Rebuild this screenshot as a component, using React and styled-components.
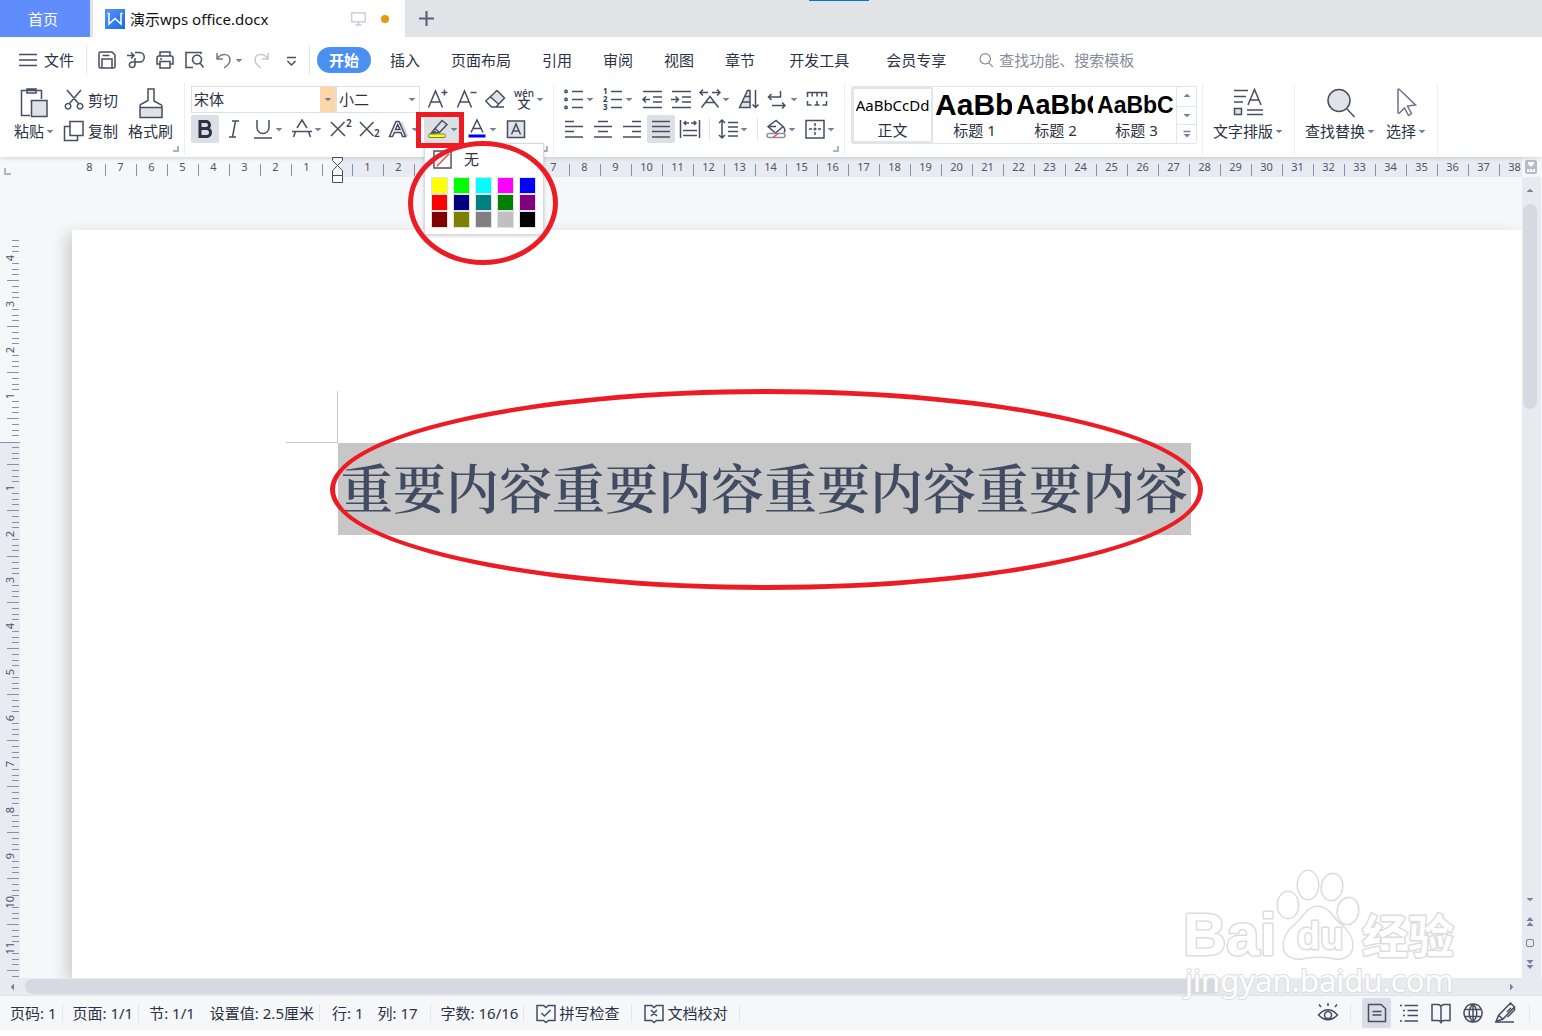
import React from "react";
import styled, { createGlobalStyle, css } from "styled-components";

const ink = "#2b3245";
const line = "#e3e5ea";
const marker = "#ed1c24";

const GlobalStyle = createGlobalStyle`
  *, *::before, *::after { box-sizing: border-box; }
  body {
    margin: 0;
    background: #fff;
    color: ${ink};
    font: 15px/20px "Noto Sans", "Noto Sans CJK SC", sans-serif;
  }
  button, select, input {
    margin: 0;
    padding: 0;
    border: 0;
    background: none;
    color: inherit;
    font: inherit;
    white-space: nowrap;
  }
  p { margin: 0; }
`;

const Shell = styled.div`
  display: flex;
  flex-direction: column;
  height: 100vh;
  padding-bottom: 6px;
  overflow: hidden;
  position: relative;
`;

/* ---------- icons ---------- */

const Svg = styled.svg`
  display: block;
  flex: none;
  overflow: visible;
  fill: none;
  stroke: #464e63;
  stroke-width: 1.5;
`;

const glyph = { stroke: "none", fill: "#343c50", fontFamily: '"Noto Sans", "Noto Sans CJK SC", sans-serif' };

const icons = {
  menu: <path d="M1 4.5h18M1 10h18M1 15.5h18" />,
  save: <path d="M2 3.500q0-1.500 1.500-1.500H15l3 3v11.500q0 1.500-1.500 1.500h-13q-1.500 0-1.500-1.500zM5 17.500V9h10v8.500M5.500 5.500h7" />,
  convert: <path d="M1 5.500h7M5 2.500l3 3-3 3M9 2.500h4.500a4.700 4.700 0 0 1 0 9.500H6.500a2.800 2.800 0 1 0 2.500 2.800V8" />,
  print: <path d="M5 6V2h10v4M5 14H2V8q0-2 2-2h12q2 0 2 2v6h-3M5 11.500h10V18H5zM5 9h2" />,
  preview: <path d="M9 17.500H2v-15h15V4M16 13l3.500 4.500M13 5a4.500 4.500 0 1 0 .1 0z" />,
  undo: <path stroke="#70788d" d="M4 3v6h6M4 9C8 3 17 3 17 10c0 4-3 6-6 8" />,
  redo: <path stroke="#c3c7ce" d="M16 3v6h-6M16 9C12 3 3 3 3 10c0 4 3 6 6 8" />,
  more: <path d="M6 7.500h9M6.500 11l4 4 4-4" />,
  search: <path stroke="#868c9b" d="M9 2a6.500 6.500 0 1 0 .1 0zM14 14l4.500 4.500" />,
  monitor: <path stroke="#bac3d8" d="M1 2.500h18v12H1zM10 14.500v4M6 18.500h8" />,
  plus: <path stroke="#566079" strokeWidth="2.800" d="M10 0v20M0 10h20" />,
  scissors: <path d="M3 0l11.500 13.500M17 0L5.500 13.500M4 13.500a2.800 2.800 0 1 0 .1 0zM16 13.500a2.800 2.800 0 1 0 .1 0z" />,
  copy: <><path d="M7 5.500H.500v14h13V15" /><path fill="#fff" d="M6 .500h13v14H6z" /></>,
  fontUp: <path d="M1.500 18.500l7-16.500 7 16.500M4 13h9M17.500.500v6M14.500 3.500h6" />,
  fontDown: <path d="M1.500 18.500l7-16.500 7 16.500M4 13h9M14.500 3.500h6" />,
  eraser: <><path fill="#dfe2e7" stroke="none" d="M12 2l7.500 7-6 6L6 8z" /><path d="M.800 12L12 1.500l7.500 7.500L11 18H6.500zM5.500 8l8.500 7.500M10 18h9" /></>,
  pinyin: <><text {...glyph} x="10" y="8" textAnchor="middle" fontSize="10" fontWeight="500">wén</text><text {...glyph} x="10" y="19" textAnchor="middle" fontSize="13" fontWeight="500">文</text></>,
  bullets: <path d="M8 2.500h11M8 10.500h11M8 18.500h11M2 1.300a1.200 1.200 0 1 0 .1 0zM2 9.300a1.200 1.200 0 1 0 .1 0zM2 17.300a1.200 1.200 0 1 0 .1 0z" />,
  numbers: <><path d="M8 2.500h11M8 10.500h11M8 18.500h11" /><text {...glyph} fontSize="8" fontWeight="700"><tspan x="0" y="5">1</tspan><tspan x="0" y="13">2</tspan><tspan x="0" y="21">3</tspan></text></>,
  outdent: <path d="M1 2.500h19M11 8h9M11 13h9M1 18.500h19M8 10.500H1M4 7.500l-3 3 3 3" />,
  indent: <path d="M1 2.500h19M11 8h9M11 13h9M1 18.500h19M0 10.500h7.500M4.500 7.500l3 3-3 3" />,
  textLayout: <path d="M0 3.500h8M3 .500l-3 3 3 3M12 3.500h8M17 .500l3 3-3 3M1.500 18.500L10 7.500l8.500 11M5.500 13.500h9" />,
  sort: <><path fill="#dfe2e7" d="M.500 18.500L8.500 1.500h2.500v17zM3 13h8M5.500 7.500H11" /><path d="M16.500 1v17.500M13.500 15.500l3 3 3-3" /></>,
  direction: <path d="M12.500 2v6H.500M3.500 5l-3 3 3 3M4 16.500h13M14 13.500l3 3-3 3" />,
  tabStops: <path d="M.500 8V3.500h19V8M5.200 3.500v4M10 3.500v4M14.800 3.500v4M.500 12v4h4M7.500 16h5M10 12v4M15.500 16h4v-4" />,
  bold: <path strokeWidth="3" stroke="#2b3245" d="M5 2.500h6a3.500 3.500 0 0 1 0 7H5zM5 9.500h6.500a4 4 0 0 1 0 8H5z" />,
  italic: <path d="M8 2h7M5 18h7M11.500 2l-3 16" />,
  underline: <path d="M4 1v7.500a6 6 0 0 0 12 0V1M1 19h18" />,
  strike: <path d="M5 9L10 1l5 8M0 12.500h20M3.500 12.500L1.500 18M16.500 12.500l2 5.500" />,
  superscript: <><path d="M0 3l14 14M13.500 3L0 17" /><text {...glyph} x="15" y="8" fontSize="10" fontWeight="600">2</text></>,
  subscript: <><path d="M0 3l13.500 14M13.500 3L0 17" /><text {...glyph} x="14" y="18" fontSize="10" fontWeight="600">2</text></>,
  effects: <><path stroke="#d2d5da" strokeWidth="3" d="M12 3l6 14.500" /><path d="M.500 17.500L7 2.500h3l6.500 15H13.500l-1.500-4H5.500l-2 4zM6.500 10.500h4.500L8.700 5.500z" /></>,
  highlight: <><path d="M7 9.500L14 1.500l5 4-7.500 8zM7 9.500l-4 5 8.500-1M3 14.500l5-2" /><rect x=".500" y="15" width="17" height="3.500" rx="1.500" fill="#ff0" stroke="#7b7f49" strokeWidth="1" /></>,
  fontColor: <><path d="M4 13.500L10 1l6 12.500M6 9.500h8" /><path d="M1.500 17h17" stroke="#00f" strokeWidth="3" /></>,
  charShade: <><path fill="#e1e4e8" d="M1.500 2h17v16.500h-17z" /><path d="M5.500 15.500L10 5l4.500 10.500M7 12h6" /></>,
  alignLeft: <path d="M1 2.500h9M1 7.500h18M1 12.500h9M1 18h18" />,
  alignCenter: <path d="M5 2.500h10M1 7.500h18M5 12.500h10M1 18h18" />,
  alignRight: <path d="M10 2.500h9M1 7.500h18M10 12.500h9M1 18h18" />,
  justify: <path d="M1 2.500h18M1 7.500h18M1 12.500h18M1 18h18" />,
  distribute: <path d="M.500 1v18M19.500 1v18M4 4h5M6 2L4 4l2 2M11 4h5M14 2l2 2-2 2M3 11.500h14M3 16.500h14" />,
  lineSpacing: <path d="M4 1v18M1 4l3-3 3 3M1 16l3 3 3-3M10 3.500h10M10 8h10M10 12.500h10M10 17h10" />,
  fill: <><path d="M2 7.500L10 1.500l7 6-7.500 6.500zM2 7.500h8M17 7.500q3 3 1 6" /><rect x="1" y="14.500" width="18" height="4" rx="2" stroke="#8c919d" fill="#fff" /><path d="M7 18.500l5-4" stroke="#f04a3a" /></>,
  borders: <path d="M1 1.500h18v17.500H1zM10 4v3M10 8.500v3M10 13v3M4 10h3M8.500 10h3M13 10h3" />,
  spell: <path d="M1 2.500h6.500L10 4.500l2.500-2H19v15h-6.500L10 19.500l-2.500-2H1zM5.500 10l3 3 6-6" />,
  proof: <path d="M1 2.500h6.500L10 4.500l2.500-2H19v15h-6.500L10 19.500l-2.500-2H1zM7 7l6 6M13 7l-6 6" />,
  eye: <path d="M.500 12Q10 1.500 19.500 12 10 21.500.500 12zM10 8.500a3.500 3.500 0 1 0 .1 0zM10 0v3M1 1.500l2 2.500M19 1.500l-2 2.500" />,
  pageView: <path d="M1.500 1.500h12.500l4.500 4V18.500h-17zM5.500 8.500h9M5.500 12h9" />,
  outline: <path d="M1 2.500h2M5.500 2.500h13.500M4 7.500h2M8.500 7.500h10.500M4 12.500h2M8.500 12.500h10.500M1 18h2M5.500 18h13.500" />,
  book: <path d="M10 3.500Q9 1.500 7 1.500H1v16h6q2 0 3 2 1-2 3-2h6v-16h-6q-2 0-3 2zM10 3.500v16" />,
  globe: <path d="M10 1a9 9 0 1 0 .1 0zM10 1c-5 5-5 13 0 18M10 1c5 5 5 13 0 18M2 6.500h16M2 13.500h16M10 1v18" />,
  pen: <path d="M1 18.500l2.500-6L15.500 0l4 4L8 16zM3.500 12.500L8 16M12 9l4-4M19.500 4v3l-7 7M1 19h18" />,
  noColor: <><path d="M1 1h18v18H1z" fill="#fff" /><path stroke="#e8473f" d="M4 17L17 4" /></>,
};

const Icon = ({ name, size = 20 }) => (
  <Svg width={size} height={size} viewBox="0 0 20 20" aria-hidden="true">{icons[name]}</Svg>
);

const bigIcons = {
  paste: <><path d="M11 27.500H2.500v-25h20V11M8 1h9v4H8z" /><path fill="#dfe2e6" d="M12.500 12.500h15.500v16H12.500z" /></>,
  brush: <><path fill="#dfe2e6" stroke="none" d="M4 20h22v9.500H4z" /><path d="M12 1h6v12l7.500 4q.500 1 .500 2v10.500H4V18.500q0-1 .500-2l7.500-4zM4 19.500h22" /></>,
  typeset: <><path d="M1 2.500h14M1 8.500h12M1 14h9M14 22h16M14 26.500h16M15 17L21.500 1.500 28 17M17 12h9" /><path fill="#dfe2e6" d="M1.500 20.500h7v6h-7z" /></>,
  find: <><circle cx="14" cy="12.500" r="11" fill="#e1e3e6" /><path d="M22 21l7.500 8" /></>,
  pointer: <path stroke="#697187" d="M7 2q0-1.500 1.500-.5L24.500 17l-8 1 4 7.500-3 2-4-7.500-5 5q-1.500 1-1.500-1z" />,
};

const BigIcon = ({ name }) => (
  <Svg width="30" height="30" viewBox="0 0 30 30" aria-hidden="true">{bigIcons[name]}</Svg>
);

const turns = { down: 0, up: 180, left: 90, right: 270 };
const Caret = ({ dir = "down", double }) => (
  <Svg width="8" height="8" viewBox="0 0 8 8" aria-hidden="true">
    <g transform={`rotate(${turns[dir]} 4 4)`} fill="#74809c" stroke="none">
      {double ? <path d="M.500-1h7L4 3zM.500 4h7L4 8z" /> : <path d="M1 3h6v.500L4 6.200 1 3.500z" />}
    </g>
  </Svg>
);

/* ---------- title tabs ---------- */

const TabBar = styled.header`
  display: flex;
  flex: none;
  height: 37px;
  background: #e2e3e7;
`;
const HomeTab = styled.button`
  width: 90px;
  margin-right: 3px;
  padding-right: 4px;
  background: #5f8dfb;
  color: #fff;
`;
const DocTab = styled.div`
  display: flex;
  align-items: center;
  width: 312px;
  padding: 0 16px 0 12px;
  background: #fff;
  color: #111;
`;
const DocTitle = styled.span`
  flex: 1;
  margin-left: 5px;
`;
const UnsavedDot = styled.i`
  width: 8px;
  height: 8px;
  margin-left: 15px;
  border-radius: 50%;
  background: #e69a0c;
`;
const NewTab = styled.button`
  display: grid;
  place-items: center;
  width: 43px;
`;
const TopAccent = styled.i`
  position: absolute;
  top: 0;
  left: 809px;
  width: 60px;
  height: 1px;
  background: #0078d7;
`;

/* ---------- menu row ---------- */

const MenuRow = styled.nav`
  display: flex;
  flex: none;
  align-items: center;
  gap: 1px;
  height: 46px;
  padding-left: 18px;
`;
const FileButton = styled.button`
  display: flex;
  align-items: center;
  gap: 6px;
`;
const Divider = styled.i`
  flex: none;
  width: 1px;
  height: ${(p) => p.$h || 30}px;
  margin: ${(p) => p.$m || "0"};
  background: ${line};
`;
const MenuTab = styled.button`
  height: 26px;
  padding: 0 ${(p) => (p.$wide ? 18 : 15)}px;
  ${(p) =>
    p.$active &&
    css`
      margin-right: 3px;
      padding: 0 12px;
      border-radius: 13px;
      background: #4a90f0;
      color: #fff;
      font-weight: 700;
    `}
`;
const SearchBox = styled.label`
  display: flex;
  align-items: center;
  gap: 5px;
  margin-left: 13px;
`;
const SearchInput = styled.input`
  width: 180px;
  outline: 0;
  &::placeholder { color: #868c9b; opacity: 1; }
`;

/* ---------- ribbon ---------- */

const Ribbon = styled.section`
  display: flex;
  flex: none;
  height: 74px;
  position: relative;
  z-index: 2;
  background: #fff;
  box-shadow: 0 3px 4px -2px rgba(40, 50, 70, 0.2);
`;
const Group = styled.div`
  display: flex;
  gap: ${(p) => p.$gap || 0}px;
  position: relative;
  padding: ${(p) => p.$pad};
  &::after {
    content: "";
    position: absolute;
    right: 0;
    top: 0;
    bottom: 2px;
    width: 1px;
    background: #eceef1;
  }
`;
const Launcher = styled.button`
  position: absolute;
  right: 6px;
  bottom: 5px;
  width: 6px;
  height: 6px;
  border: solid #aab2c3;
  border-width: 0 2px 2px 0;
`;
const Rows = styled.div`
  display: flex;
  flex-direction: column;
  gap: 2px;
  padding-top: 2px;
`;
const Row = styled.div`
  display: flex;
  align-items: center;
  gap: 1px;
  height: 28px;
`;
const ToolButton = styled.button`
  display: flex;
  flex: none;
  align-items: center;
  gap: 2px;
  width: ${(p) => (p.$menu ? 38 : 28)}px;
  height: 28px;
  padding-left: 4px;
  border-radius: 2px;
  background: ${(p) => (p.$on ? "#dce0e5" : "transparent")};
`;
const Splitter = styled.i`
  width: 8px;
  height: 22px;
  border-left: 1px solid ${line};
  margin-left: 4px;
  margin-right: -4px;
`;
const BigButton = styled.button`
  display: flex;
  flex-direction: column;
  align-items: center;
  gap: 3px;
  padding-top: 5px;
  height: 60px;
`;
const Label = styled.span`
  display: flex;
  align-items: center;
  gap: 2px;
`;
const SmallStack = styled.div`
  display: flex;
  flex-direction: column;
  padding-top: 1px;
`;
const SmallButton = styled.button`
  display: flex;
  align-items: center;
  gap: 4px;
  height: 31px;
`;
const Combo = styled.span`
  display: flex;
  align-items: center;
  width: ${(p) => p.$w}px;
  height: 27px;
  margin-left: -1px;
  border: 1px solid #dcdfe5;
  &:first-child { margin-left: 0; }
`;
const ComboSelect = styled.select`
  appearance: none;
  flex: 1;
  min-width: 0;
  height: 25px;
  padding-left: 2px;
  outline: 0;
`;
const ComboArrow = styled.span`
  display: grid;
  place-items: center;
  width: 15px;
  height: 100%;
  background: ${(p) => (p.$hot ? "#ffd6a8" : "transparent")};
  pointer-events: none;
`;
const ComboGap = styled.i`
  width: 1px;
`;

const Anchor = styled.div`
  position: relative;
`;
const RedBox = styled.i`
  position: absolute;
  z-index: 3;
  left: -8px;
  top: -3px;
  width: 48px;
  height: 36px;
  border: 5px solid ${marker};
  pointer-events: none;
`;
const Popup = styled.div`
  position: absolute;
  z-index: 2;
  top: 28px;
  left: 0;
  width: 120px;
  height: 92px;
  padding: 3px 6px;
  border: 1px solid #d9dbe0;
  background: #fff;
  box-shadow: 0 1px 3px rgba(0, 0, 0, 0.2);
`;
const NoColor = styled.button`
  display: flex;
  align-items: center;
  gap: 12px;
  height: 24px;
  padding-left: 2px;
`;
const Swatches = styled.div`
  display: grid;
  grid-template-columns: repeat(5, 17px);
  grid-auto-rows: 17px;
  column-gap: 5px;
  margin-top: 6px;
`;
const Swatch = styled.button`
  border: 1px solid #e0e2e6;
  background: ${(p) => p.$c};
  background-clip: padding-box;
`;
const PopupRing = styled.i`
  position: absolute;
  z-index: 3;
  left: -17px;
  top: -3px;
  width: 150px;
  height: 124px;
  border: 5px solid ${marker};
  border-radius: 50%;
  pointer-events: none;
`;

const Gallery = styled.div`
  display: flex;
  width: 346px;
  height: 58px;
  margin-top: 3px;
  border: 1px solid ${line};
  border-radius: 2px;
`;
const StyleCard = styled.button`
  display: flex;
  flex-direction: column;
  align-items: ${(p) => (p.$on ? "center" : "stretch")};
  width: 81px;
  padding: ${(p) => (p.$on ? "1px 0" : "3px 0 3px 2px")};
  overflow: hidden;
  border: ${(p) => (p.$on ? `2px solid ${line}` : "0")};
`;
const Sample = styled.span`
  height: 30px;
  overflow: hidden;
  margin-right: ${(p) => (p.$heading ? 2 : 0)}px;
  color: #000;
  text-align: left;
  line-height: 30px;
  font-size: ${(p) => p.$size}px;
  ${(p) => p.$heading && css`font-family: "Liberation Sans", sans-serif; font-weight: 700;`}
`;
const GalleryNav = styled.div`
  display: grid;
  flex: 1;
  grid-template-rows: repeat(3, 1fr);
  border-left: 1px solid ${line};
`;
const GalleryButton = styled.button`
  display: grid;
  place-items: center;
  & + & { border-top: 1px solid ${line}; }
`;

/* ---------- rulers ---------- */

const RulerRow = styled.div`
  display: flex;
  flex: none;
  position: relative;
  z-index: 1;
  height: 20px;
  background: #f5f7f9;
`;
const RulerTrack = styled.div`
  display: flex;
  flex: 1;
  min-width: 0;
  background: linear-gradient(to right, #f5f7f9 337px, #e8ebf1 337px);
`;
const TabCorner = styled.span`
  flex: none;
  width: 74px;
  &::before {
    content: "";
    display: block;
    width: 7px;
    height: 7px;
    margin: 11px 0 0 4px;
    border: solid #b0b5c0;
    border-width: 0 0 2px 2px;
  }
`;
const RulerUnit = styled.span`
  flex: none;
  width: 31px;
  padding-top: 3px;
  color: #4b556b;
  font-size: 11px;
  line-height: 14px;
  text-align: center;
  background: linear-gradient(#8791a9, #8791a9) 0 7px / 1px 12px no-repeat;
  &:nth-child(2) { background: none; }
`;
const RulerToggle = styled.button`
  display: grid;
  place-items: center;
  position: relative;
  width: 18px;
  margin-right: 2px;
  background: #f5f7f9;
`;
const IndentMark = () => (
  <Svg width="30" height="26" viewBox="0 0 30 26" aria-hidden="true">
    <path fill="#fff" strokeWidth="1" d="M10.500-2.500h10v3l-5 5-5-5zM15.500 5.500l5 5v5h-10v-5zM10.500 15.500h10v7h-10z" />
  </Svg>
);
const IndentCell = styled.span`
  position: relative;
  z-index: 1;
  flex: none;
  width: 30px;
  padding-top: 3px;
  background: linear-gradient(#8791a9, #8791a9) 0 7px / 1px 12px no-repeat;
`;

const Workspace = styled.main`
  display: flex;
  flex: 1;
  min-height: 0;
  background: #f5f7f9;
`;
const SideRuler = styled.div`
  flex: none;
  width: 20px;
  padding-top: 58px;
  overflow: hidden;
  background: linear-gradient(#f5f7f9 265px, #8791a9 265px, #8791a9 266px, #e8ebf1 266px);
`;
const SideUnit = styled.div`
  display: flex;
  align-items: center;
  height: 46px;
  padding-right: 1px;
`;
const SideNumber = styled.span`
  display: flex;
  flex: none;
  justify-content: center;
  width: 12px;
  margin-left: 4px;
  margin-right: -9px;
  color: #4b556b;
  font-size: 11px;
  line-height: 12px;
  writing-mode: vertical-rl;
  transform: rotate(180deg);
`;
const SideTicks = styled.span`
  display: grid;
  flex: 1;
  grid-template-rows: repeat(8, 1fr);
  justify-items: end;
  height: 46px;
`;
const SideTick = styled.i`
  width: ${(p) => (p.$major ? 12 : 7)}px;
  border-bottom: 1px solid ${(p) => (p.$blank ? "transparent" : "#8791a9")};
`;

/* ---------- page ---------- */

const Canvas = styled.div`
  flex: 1;
  min-width: 0;
  overflow: hidden;
  display: flex;
  padding: 53px 0 0 52px;
`;
const Paper = styled.article`
  flex: 1;
  min-width: 0;
  padding: 213px 0 0 266px;
  background: #fff;
  box-shadow: -6px 4px 14px rgba(0, 0, 0, 0.16);
`;
const Selected = styled.p`
  position: relative;
  width: 853px;
  height: 92px;
  padding-left: 2px;
  background: #c7c7c7;
  color: #414b62;
  font-family: "Noto Serif CJK SC", "Noto Sans CJK SC", serif;
  font-size: 53px;
  font-weight: 600;
  line-height: 86px;
  white-space: nowrap;
  &::before {
    content: "";
    position: absolute;
    left: -52px;
    top: -52px;
    width: 52px;
    height: 52px;
    border: solid #c6c6c6;
    border-width: 0 1px 1px 0;
  }
`;
const TextRing = styled.i`
  position: absolute;
  left: -8px;
  top: -54px;
  width: 873px;
  height: 201px;
  border: 5px solid ${marker};
  border-radius: 50%;
  pointer-events: none;
`;

/* ---------- scroll bars ---------- */

const VScroll = styled.div`
  display: flex;
  flex-direction: column;
  align-items: center;
  width: 20px;
  padding: 0 3px 2px 0;
  border-right: 1px solid #f5f7f9;
  background: #e8eaf0;
`;
const ScrollButton = styled.button`
  display: grid;
  flex: none;
  place-items: center;
  width: ${(p) => p.$w || 16}px;
  height: ${(p) => p.$h || 22}px;
`;
const VTrack = styled.div`
  flex: 1;
  width: 14px;
`;
const VThumb = styled.div`
  height: 30%;
  border-radius: 7px;
  background: #d6d9e1;
`;
const HScroll = styled.div`
  display: flex;
  flex: none;
  align-items: center;
  height: 18px;
  padding-right: 20px;
  border-bottom: 1px solid #e0e2e8;
  background: #e8eaf0;
`;
const HTrack = styled.div`
  flex: 1;
`;
const HThumb = styled.div`
  width: 81%;
  height: 15px;
  border-radius: 8px;
  background: #d6d9e1;
`;
const SquareMark = styled.i`
  width: 8px;
  height: 8px;
  border: 1px solid #74809c;
  border-radius: 2px;
`;

/* ---------- status bar ---------- */

const StatusBar = styled.footer`
  display: flex;
  flex: none;
  align-items: center;
  height: 34px;
  background: #f5f7f9;
`;
const Stat = styled.span`
  display: flex;
  gap: 14px;
  padding: ${(p) => (p.$wide ? "0 12px" : "0 5px 0 10px")};
`;
const StatButton = styled.button`
  display: flex;
  align-items: center;
  gap: 3px;
  padding: 0 12px;
`;
const Spacer = styled.i`
  flex: 1;
`;
const ViewButton = styled.button`
  display: grid;
  place-items: center;
  width: 29px;
  height: 30px;
  margin-right: 3px;
  border-radius: 2px;
  background: ${(p) => (p.$on ? "#d9dde5" : "transparent")};
`;

const Watermark = styled.svg`
  position: absolute;
  right: 78px;
  bottom: 28px;
  overflow: visible;
  pointer-events: none;
  fill: #fff;
  stroke: #dcdcdc;
  stroke-width: 3;
  stroke-linejoin: round;
  paint-order: stroke;
`;

const Logo = () => (
  <svg width="20" height="20" viewBox="0 0 20 20" aria-hidden="true">
    <defs>
      <linearGradient id="wps" x1="0" y1="0" x2="1" y2="1">
        <stop offset="0" stopColor="#5b96f5" />
        <stop offset="1" stopColor="#1668ec" />
      </linearGradient>
    </defs>
    <path fill="url(#wps)" d="M0 0h20v20H0z" />
    <path fill="none" stroke="#fff" strokeWidth="1.500" d="M2.500 4.500H4v10.500l6-5.500 6 5.500V4.500h1.500" />
  </svg>
);

const Tool = ({ icon, label, menu, on }) => (
  <ToolButton aria-label={label} $menu={menu} $on={on}>
    <Icon name={icon} />
    {menu && <Caret />}
  </ToolButton>
);

const menuTabs = ["插入", "页面布局", "引用", "审阅", "视图", "章节", "开发工具", "会员专享"];
const quick = [["save", "保存"], ["convert", "输出"], ["print", "打印"], ["preview", "打印预览"]];
const palette = [
  "#ffff00", "#00ff00", "#00ffff", "#ff00ff", "#0000ff",
  "#ff0000", "#000080", "#008080", "#008000", "#800080",
  "#800000", "#808000", "#808080", "#c0c0c0", "#000000",
];
const headings = [["标题 1", 30, "AaBb"], ["标题 2", 27, "AaBbC"], ["标题 3", 23, "AaBbCc"]];
const leftUnits = [8, 7, 6, 5, 4, 3, 2, 1];
const rightUnits = Array.from({ length: 38 }, (_, i) => i + 1);
const sideUnits = [4, 3, 2, 1, 0, ...Array.from({ length: 12 }, (_, i) => i + 1)];

export default function App() {
  return (
    <Shell>
      <GlobalStyle />
      <TabBar>
        <HomeTab>首页</HomeTab>
        <DocTab>
          <Logo />
          <DocTitle>演示wps office.docx</DocTitle>
          <Icon name="monitor" size={15} />
          <UnsavedDot />
        </DocTab>
        <NewTab aria-label="新建标签"><Icon name="plus" size={15} /></NewTab>
        <TopAccent />
      </TabBar>

      <MenuRow>
        <FileButton><Icon name="menu" />文件</FileButton>
        <Divider $m="0 5px 0 11px" />
        {quick.map(([icon, label]) => <Tool key={icon} icon={icon} label={label} />)}
        <Tool icon="undo" label="撤销" menu />
        <Tool icon="redo" label="恢复" />
        <Tool icon="more" label="更多" />
        <Divider $m="0 6px 0 3px" />
        <MenuTab $active>开始</MenuTab>
        {menuTabs.map((t) => <MenuTab key={t} $wide={t === "开发工具" || t === "会员专享"}>{t}</MenuTab>)}
        <SearchBox>
          <Icon name="search" size={16} />
          <SearchInput aria-label="查找" placeholder="查找功能、搜索模板" />
        </SearchBox>
      </MenuRow>

      <Ribbon>
        <Group $pad="0 12px 0 14px" $gap={10}>
          <BigButton><BigIcon name="paste" /><Label>粘贴<Caret /></Label></BigButton>
          <SmallStack>
            <SmallButton><Icon name="scissors" />剪切</SmallButton>
            <SmallButton><Icon name="copy" />复制</SmallButton>
          </SmallStack>
          <BigButton><BigIcon name="brush" /><Label>格式刷</Label></BigButton>
          <Launcher aria-label="剪贴板" />
        </Group>

        <Group $pad="0 6px 0 6px">
          <Rows>
            <Row>
              <Combo $w={145}>
                <ComboSelect aria-label="字体"><option>宋体</option></ComboSelect>
                <ComboArrow $hot><Caret /></ComboArrow>
              </Combo>
              <Combo $w={84}>
                <ComboSelect aria-label="字号"><option>小二</option></ComboSelect>
                <ComboArrow><Caret /></ComboArrow>
              </Combo>
              <ComboGap />
              <Tool icon="fontUp" label="增大字号" />
              <Tool icon="fontDown" label="减小字号" />
              <Tool icon="eraser" label="清除格式" />
              <Tool icon="pinyin" label="拼音指南" menu />
            </Row>
            <Row>
              <Tool icon="bold" label="加粗" on />
              <Tool icon="italic" label="倾斜" />
              <Tool icon="underline" label="下划线" menu />
              <Tool icon="strike" label="删除线" menu />
              <Tool icon="superscript" label="上标" />
              <Tool icon="subscript" label="下标" />
              <Tool icon="effects" label="文字效果" menu />
              <Anchor>
                <Tool icon="highlight" label="突出显示" menu on />
                <Popup>
                  <NoColor><Icon name="noColor" size={19} />无</NoColor>
                  <Swatches>
                    {palette.map((c) => <Swatch key={c} $c={c} aria-label={c} />)}
                  </Swatches>
                  <PopupRing />
                </Popup>
                <RedBox />
              </Anchor>
              <Tool icon="fontColor" label="字体颜色" menu />
              <Tool icon="charShade" label="字符底纹" />
            </Row>
          </Rows>
          <Launcher aria-label="字体设置" />
        </Group>

        <Group $pad="0 6px">
          <Rows>
            <Row>
              <Tool icon="bullets" label="项目符号" menu />
              <Tool icon="numbers" label="编号" menu />
              <Tool icon="outdent" label="减少缩进" />
              <Tool icon="indent" label="增加缩进" />
              <Tool icon="textLayout" label="中文版式" menu />
              <Tool icon="sort" label="排序" />
              <Tool icon="direction" label="显示标记" menu />
              <Tool icon="tabStops" label="制表位" />
            </Row>
            <Row>
              <Tool icon="alignLeft" label="左对齐" />
              <Tool icon="alignCenter" label="居中" />
              <Tool icon="alignRight" label="右对齐" />
              <Tool icon="justify" label="两端对齐" on />
              <Tool icon="distribute" label="分散对齐" />
              <Splitter />
              <Tool icon="lineSpacing" label="行距" menu />
              <Splitter />
              <Tool icon="fill" label="底纹颜色" menu />
              <Tool icon="borders" label="边框" menu />
            </Row>
          </Rows>
          <Launcher aria-label="段落设置" />
        </Group>

        <Group $pad="0 6px">
          <Gallery>
            <StyleCard $on><Sample $size={15}>AaBbCcDd</Sample>正文</StyleCard>
            {headings.map(([name, size, sample]) => (
              <StyleCard key={name}><Sample $heading $size={size}>{sample}</Sample>{name}</StyleCard>
            ))}
            <GalleryNav>
              <GalleryButton aria-label="上一行"><Caret dir="up" /></GalleryButton>
              <GalleryButton aria-label="下一行"><Caret /></GalleryButton>
              <GalleryButton aria-label="展开样式">
                <Svg width="8" height="8" viewBox="0 0 8 8" aria-hidden="true">
                  <path d="M.500 1.500h7" stroke="#74809c" /><path d="M.500 4h7L4 7.500z" fill="#74809c" stroke="none" />
                </Svg>
              </GalleryButton>
            </GalleryNav>
          </Gallery>
        </Group>

        <Group $pad="0 12px 0 10px">
          <BigButton><BigIcon name="typeset" /><Label>文字排版<Caret /></Label></BigButton>
        </Group>
        <Group $pad="0 12px 0 10px" $gap={11}>
          <BigButton><BigIcon name="find" /><Label>查找替换<Caret /></Label></BigButton>
          <BigButton><BigIcon name="pointer" /><Label>选择<Caret /></Label></BigButton>
        </Group>
      </Ribbon>

      <RulerRow>
        <RulerTrack>
          <TabCorner />
          {leftUnits.map((n) => <RulerUnit key={n}>{n}</RulerUnit>)}
          <IndentCell><IndentMark /></IndentCell>
          {rightUnits.map((n) => <RulerUnit key={n}>{n}</RulerUnit>)}
        </RulerTrack>
        <RulerToggle aria-label="标尺">
          <svg width="12" height="14" viewBox="0 0 12 14" aria-hidden="true">
            <rect width="12" height="14" rx="2" fill="#b3bbd0" />
            <path fill="#fff" d="M3 2h6v2L6 7 3 4zM2 9h2v2h1V9h2v2h1V9h2v3H2z" />
          </svg>
        </RulerToggle>
      </RulerRow>

      <Workspace>
        <SideRuler>
          {sideUnits.map((n, i) => (
            <SideUnit key={i}>
              <SideNumber>{n || ""}</SideNumber>
              <SideTicks>
                {[1, 2, 3, 4, 5, 6, 7, 8].map((k) => <SideTick key={k} $major={k === 8} $blank={k === 4} />)}
              </SideTicks>
            </SideUnit>
          ))}
        </SideRuler>
        <Canvas>
          <Paper>
            <Selected>
              重要内容重要内容重要内容重要内容
              <TextRing />
            </Selected>
          </Paper>
        </Canvas>
        <VScroll>
          <ScrollButton $h={27} aria-label="向上滚动"><Caret dir="up" /></ScrollButton>
          <VTrack><VThumb /></VTrack>
          <ScrollButton aria-label="向下滚动"><Caret /></ScrollButton>
          <ScrollButton aria-label="上一页"><Caret dir="up" double /></ScrollButton>
          <ScrollButton aria-label="选择浏览对象"><SquareMark /></ScrollButton>
          <ScrollButton aria-label="下一页"><Caret double /></ScrollButton>
        </VScroll>
      </Workspace>

      <HScroll>
        <ScrollButton $w={25} $h={16} aria-label="向左滚动"><Caret dir="left" /></ScrollButton>
        <HTrack><HThumb /></HTrack>
        <ScrollButton $w={22} $h={16} aria-label="向右滚动"><Caret dir="right" /></ScrollButton>
      </HScroll>

      <StatusBar>
        <Stat>页码: 1</Stat><Divider $h={18} />
        <Stat>页面: 1/1</Stat><Divider $h={18} />
        <Stat>节: 1/1</Stat>
        <Stat>设置值: 2.5厘米</Stat><Divider $h={18} />
        <Stat $wide><span>行: 1</span><span>列: 17</span></Stat><Divider $h={18} />
        <Stat>字数: 16/16</Stat><Divider $h={18} />
        <StatButton><Icon name="spell" />拼写检查</StatButton><Divider $h={18} />
        <StatButton><Icon name="proof" />文档校对</StatButton><Divider $h={18} />
        <Spacer />
        <ViewButton aria-label="护眼模式"><Icon name="eye" /></ViewButton>
        <Divider $h={18} $m="0 11px 0 5px" />
        <ViewButton $on aria-label="页面视图"><Icon name="pageView" /></ViewButton>
        <ViewButton aria-label="大纲视图"><Icon name="outline" /></ViewButton>
        <ViewButton aria-label="阅读版式"><Icon name="book" /></ViewButton>
        <ViewButton aria-label="Web版式"><Icon name="globe" /></ViewButton>
        <ViewButton aria-label="写作模式"><Icon name="pen" /></ViewButton>
        <Divider $h={18} $m="0 12px 0 7px" />
      </StatusBar>

      <Watermark width="284" height="138" viewBox="0 0 284 138" aria-label="Baidu 经验">
        <g fontFamily='"Liberation Sans", "Noto Sans CJK SC", sans-serif' fontWeight="700">
          <text x="3" y="85" fontSize="60">Bai</text>
          <ellipse cx="108" cy="35" rx="10" ry="13" />
          <ellipse cx="128" cy="15" rx="10" ry="14" />
          <ellipse cx="152" cy="17" rx="10" ry="13" transform="rotate(10 152 17)" />
          <ellipse cx="168" cy="41" rx="10" ry="13" transform="rotate(8 168 41)" />
          <path d="M137 37c12 0 15 11 24 18 8 7 12 14 11 22-1 9-10 13-18 11-11-2-20-2-31 0-9 2-18-2-19-11-1-9 4-16 11-22 9-7 12-18 22-18z" />
          <text x="117" y="79" fontSize="38">du</text>
          <text x="182" y="83" fontSize="46">经验</text>
        </g>
        <text x="5" y="122" fontSize="31" strokeWidth="2">jingyan.baidu.com</text>
      </Watermark>
    </Shell>
  );
}
